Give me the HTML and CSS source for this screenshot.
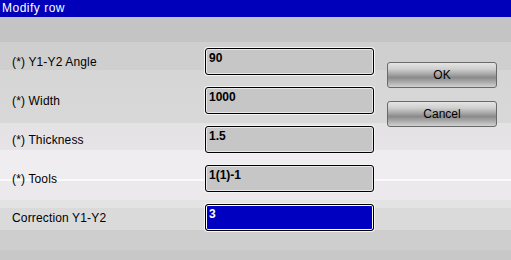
FILE: index.html
```html
<!DOCTYPE html>
<html>
<head>
<meta charset="utf-8">
<link rel="stylesheet" href="styles.css">
</head>
<body>
<div class="titlebar">Modify row</div>
<div class="content">
  <div class="form">
    <div class="row"><div class="label">(*) Y1-Y2 Angle</div><div class="field">90</div></div>
    <div class="row"><div class="label">(*) Width</div><div class="field">1000</div></div>
    <div class="row"><div class="label">(*) Thickness</div><div class="field">1.5</div></div>
    <div class="row"><div class="label">(*) Tools</div><div class="field">1(1)-1</div></div>
    <div class="row"><div class="label">Correction Y1-Y2</div><div class="field active">3</div></div>
  </div>
  <div class="buttons">
    <div class="btn">OK</div>
    <div class="btn">Cancel</div>
  </div>
</div>
</body>
</html>
```
FILE: styles.css
```css
html, body {
  margin: 0;
  padding: 0;
}
body {
  width: 511px;
  height: 260px;
  overflow: hidden;
  font-family: "Liberation Sans", Arial, sans-serif;
  font-size: 12px;
  color: #000;
  background: linear-gradient(to bottom,
    #c4c4c4 0px, #c4c4c4 42px,
    #cfcfcf 42px, #cfcfcf 70px,
    #d6d6d6 70px, #d8d8d8 123px,
    #e4e2e4 123px, #e6e4e6 150px,
    #efedef 150px, #efedef 179px,
    #fafafa 179px, #fafafa 181px,
    #ebe9eb 181px, #ebe9eb 200px,
    #e3e3e3 200px, #e3e3e3 208px,
    #dadada 208px, #dadada 230px,
    #cecece 230px, #cecece 250px,
    #c8c8c8 250px, #c8c8c8 260px);
}
.titlebar {
  height: 17px;
  background: #0000bb;
  color: #fff;
  font-size: 12px;
  line-height: 17px;
  padding-left: 2px;
  letter-spacing: 0.5px;
}
.content {
  display: flex;
  padding-top: 31px;
}
.form {
  display: flex;
  flex-direction: column;
  gap: 12px;
  padding-left: 12px;
}
.row {
  display: flex;
  align-items: center;
  height: 27px;
}
.label {
  width: 193px;
  padding-top: 1px;
  letter-spacing: 0.15px;
}
.field {
  box-sizing: border-box;
  width: 169px;
  height: 27px;
  border: 1px solid #000;
  border-radius: 3px;
  background: #c6c6c6;
  box-shadow: 0 0 0 1px #f4f4f4, inset 0 0 0 1px #e8e8e8;
  font-weight: bold;
  font-size: 12px;
  padding: 2px 0 0 3px;
  line-height: 14px;
}
.field.active {
  background: #0000c0;
  color: #fff;
  box-shadow: 0 0 0 1px #f4f4f4, inset 0 0 0 1px #ffffff;
}
.buttons {
  display: flex;
  flex-direction: column;
  gap: 13px;
  margin-left: 13px;
  margin-top: 14px;
}
.btn {
  box-sizing: border-box;
  width: 110px;
  height: 26px;
  border: 1px solid #6a6a6a;
  border-radius: 3px;
  background: linear-gradient(to bottom, #e4e4e4 0%, #cfcfcf 25%, #a0a0a0 50%, #8a8a8a 60%, #a8a8a8 78%, #d2d2d2 100%);
  display: flex;
  align-items: center;
  justify-content: center;
  font-size: 12px;
}
```
